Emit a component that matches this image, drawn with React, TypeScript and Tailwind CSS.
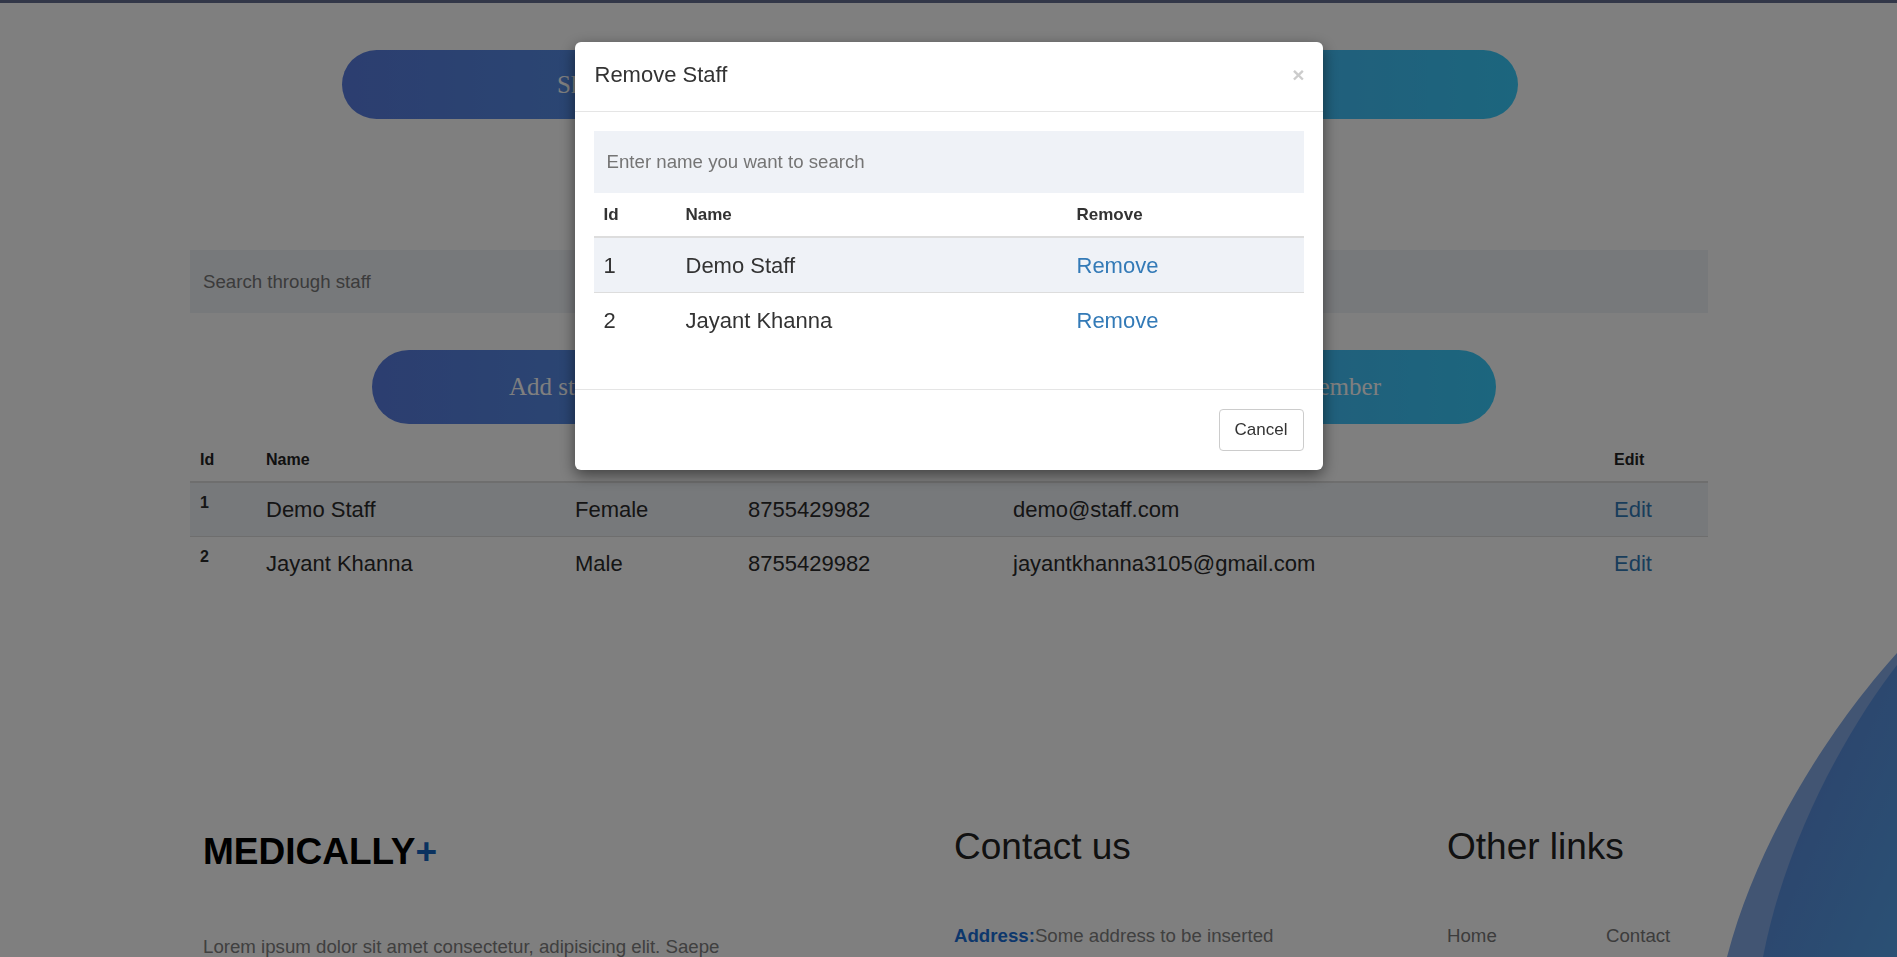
import React from "react";

const staff = [
  { id: 1, name: "Demo Staff", gender: "Female", phone: "8755429982", email: "demo@staff.com" },
  { id: 2, name: "Jayant Khanna", gender: "Male", phone: "8755429982", email: "jayantkhanna3105@gmail.com" },
];

const App: React.FC = () => {
  return (
    <div className="relative h-screen w-full overflow-hidden bg-white font-['Liberation_Sans',Arial,sans-serif] text-[#333]">
      <div className="h-[3px] bg-[#646e90]" />

      <div className="ml-[190px] w-[1518px]">
        {/* top action bar */}
        <div className="mt-[47px] ml-[152px] flex h-[69px] w-[1176px] items-center rounded-full bg-linear-to-r from-[#587ce0] to-[#38ccfc] pl-[215px] font-['Liberation_Serif',serif] text-[25px] text-white">
          Show staff
        </div>

        <input
          className="mt-[131px] h-[63px] w-full bg-[#eff2f7] px-[13px] text-[18.67px] text-[#333] outline-none placeholder:text-[#777]"
          placeholder="Search through staff"
        />

        <div className="mt-[37px] ml-[182px] flex h-[74px] w-[1124px] items-center justify-between rounded-full bg-linear-to-r from-[#587ce0] to-[#38ccfc] pl-[137px] pr-[115px] font-['Liberation_Serif',serif] text-[25px] text-white">
          <span>Add staff member</span>
          <span>Remove staff member</span>
        </div>

        {/* staff table */}
        <div className="mt-[14px]">
          <div className="grid h-[45px] grid-cols-[66px_309px_173px_265px_601px_1fr] items-center border-b-2 border-[#ddd] text-[16px] font-bold text-[#222]">
            <div className="pl-[10px]">Id</div>
            <div className="pl-[10px]">Name</div>
            <div className="pl-[10px]">Gender</div>
            <div className="pl-[10px]">Phone</div>
            <div className="pl-[10px]">Email</div>
            <div className="pl-[10px]">Edit</div>
          </div>
          {staff.map((s, i) => (
            <div
              key={s.id}
              className={
                i === 0
                  ? "grid h-[54px] grid-cols-[66px_309px_173px_265px_601px_1fr] items-center border-b border-[#ddd] bg-[#eff2f7] text-[22px] text-[#2a2a2a]"
                  : "grid h-[53px] grid-cols-[66px_309px_173px_265px_601px_1fr] items-center text-[22px] text-[#2a2a2a]"
              }
            >
              <div className="self-start pl-[10px] pt-[8px] text-[16px] font-bold">{s.id}</div>
              <div className="pl-[10px]">{s.name}</div>
              <div className="pl-[10px]">{s.gender}</div>
              <div className="pl-[10px]">{s.phone}</div>
              <div className="pl-[10px]">{s.email}</div>
              <div className="pl-[10px] text-[#337ab7]">Edit</div>
            </div>
          ))}
        </div>
      </div>

      {/* footer */}
      <div className="mt-[236px] ml-[203px] grid grid-cols-[751px_493px_1fr]">
        <div>
          <div className="mt-[6px] text-[37px] font-bold leading-[40px] text-black">
            MEDICALLY<span className="text-[#1565c0]">+</span>
          </div>
          <p className="mt-[62px] text-[18.67px] leading-[26px] text-[#808080]">
            Lorem ipsum dolor sit amet consectetur, adipisicing elit. Saepe
          </p>
        </div>
        <div>
          <h2 className="text-[37px] leading-[41px] text-[#222]">Contact us</h2>
          <p className="mt-[56px] text-[18.67px] leading-[26px] text-[#808080]">
            <span className="font-bold text-[#1a6fd8]">Address:</span>Some address to be inserted
          </p>
        </div>
        <div>
          <h2 className="text-[37px] leading-[41px] text-[#222]">Other links</h2>
          <div className="mt-[56px] grid grid-cols-[159px_auto] text-[18.67px] leading-[26px] text-[#787878]">
            <span>Home</span>
            <span>Contact</span>
          </div>
        </div>
      </div>

      <svg className="absolute bottom-0 right-0 h-[304px] w-[170px]" viewBox="0 0 170 304" preserveAspectRatio="none">
        <defs>
          <linearGradient id="wave" x1="0" y1="0" x2="1" y2="1">
            <stop offset="0" stopColor="#5a80d4" />
            <stop offset="1" stopColor="#56a2ea" />
          </linearGradient>
        </defs>
        <path d="M170 0 C 120 55, 35 170, 0 304 L170 304 Z" fill="#84aae6" />
        <path d="M170 12 C 125 70, 60 180, 36 304 L170 304 Z" fill="url(#wave)" />
      </svg>

      {/* modal */}
      <div className="fixed inset-0 bg-black/50">
        <div className="mx-auto mt-[42px] w-[748px] rounded-[6px] bg-white shadow-[0_5px_15px_rgba(0,0,0,0.5)]">
          <div className="flex h-[70px] items-center justify-between border-b border-[#e5e5e5] pb-[4px] pl-[20px] pr-[18px]">
            <h4 className="text-[22px] text-[#333]">Remove Staff</h4>
            <button className="text-[21px] font-bold leading-none text-[#ccc]">×</button>
          </div>
          <div className="px-[19px] pt-[19px] pb-[41px]">
            <input
              className="h-[62px] w-full bg-[#eff2f7] px-[13px] text-[18.67px] text-[#333] outline-none placeholder:text-[#757575]"
              placeholder="Enter name you want to search"
            />
            <div className="grid h-[45px] grid-cols-[82px_391px_1fr] items-center border-b-2 border-[#ddd] text-[17px] font-bold text-[#333]">
              <div className="pl-[10px]">Id</div>
              <div className="pl-[10px]">Name</div>
              <div className="pl-[10px]">Remove</div>
            </div>
            {staff.map((s, i) => (
              <div
                key={s.id}
                className={
                  i === 0
                    ? "grid h-[55px] grid-cols-[82px_391px_1fr] items-center border-b border-[#ddd] bg-[#eff2f7] text-[22px] text-[#333]"
                    : "grid h-[55px] grid-cols-[82px_391px_1fr] items-center text-[22px] text-[#333]"
                }
              >
                <div className="pl-[10px]">{s.id}</div>
                <div className="pl-[10px]">{s.name}</div>
                <div className="pl-[10px] text-[#337ab7]">Remove</div>
              </div>
            ))}
          </div>
          <div className="flex justify-end border-t border-[#e5e5e5] px-[19px] py-[19px]">
            <button className="h-[42px] w-[85px] rounded-[4px] border border-[#ccc] bg-white text-[17px] text-[#333]">
              Cancel
            </button>
          </div>
        </div>
      </div>
    </div>
  );
};

export default App;
